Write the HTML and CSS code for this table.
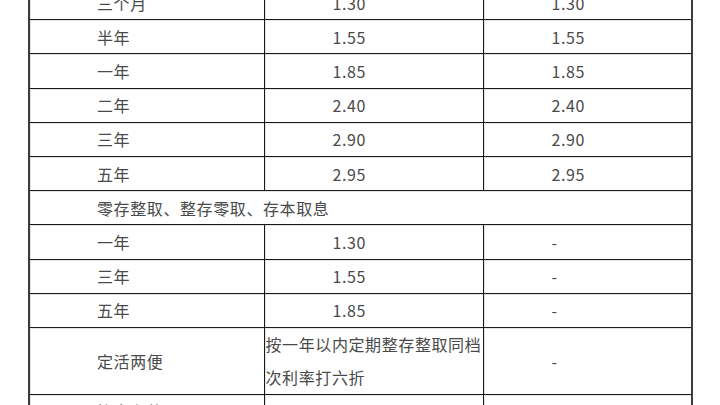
FILE: index.html
```html
<!DOCTYPE html>
<html lang="zh-CN">
<head>
<meta charset="utf-8">
<link rel="stylesheet" href="styles.css">
</head>
<body>
<table class="rates">
  <colgroup><col class="c1"><col class="c2"><col class="c3"></colgroup>
  <tr><td>三个月</td><td>1.30</td><td>1.30</td></tr>
  <tr><td>半年</td><td>1.55</td><td>1.55</td></tr>
  <tr><td>一年</td><td>1.85</td><td>1.85</td></tr>
  <tr><td>二年</td><td>2.40</td><td>2.40</td></tr>
  <tr><td>三年</td><td>2.90</td><td>2.90</td></tr>
  <tr><td>五年</td><td>2.95</td><td>2.95</td></tr>
  <tr><td colspan="3">零存整取、整存零取、存本取息</td></tr>
  <tr><td>一年</td><td>1.30</td><td>-</td></tr>
  <tr><td>三年</td><td>1.55</td><td>-</td></tr>
  <tr><td>五年</td><td>1.85</td><td>-</td></tr>
  <tr class="tall"><td>定活两便</td><td class="wrap">按一年以内定期整存整取同档次利率打六折</td><td>-</td></tr>
  <tr><td>协定存款</td><td>1.00</td><td>-</td></tr>
</table>
</body>
</html>
```
FILE: styles.css
```css
html, body {
  margin: 0;
  padding: 0;
  background: #fff;
}
body {
  width: 720px;
  height: 405px;
  overflow: hidden;
  font-family: "Noto Sans CJK SC", "Noto Sans", sans-serif;
  color: #4a4a4a;
}
.rates {
  margin: -16px 0 0 28px;
  border-collapse: collapse;
  border: 2px solid #3c3c3c;
  table-layout: fixed;
  width: 663px;
}
.c1 { width: 235px; }
.c2 { width: 219px; }
.c3 { width: 209px; }
.rates td {
  border: 1px solid #1a1a1a;
  height: 33.2px;
  padding: 0 0 0 67px;
  font-size: 16px;
  letter-spacing: 0.6px;
  line-height: 20px;
  vertical-align: middle;
  box-shadow: inset 1px 1px 0 #e4e4e4;
  white-space: nowrap;
}
.rates td + td {
  padding-left: 68px;
}
.rates tr.tall td {
  height: 64px;
}
.rates td.wrap {
  white-space: normal;
  padding: 0 0 0 1px;
  line-height: 33px;
}
```
